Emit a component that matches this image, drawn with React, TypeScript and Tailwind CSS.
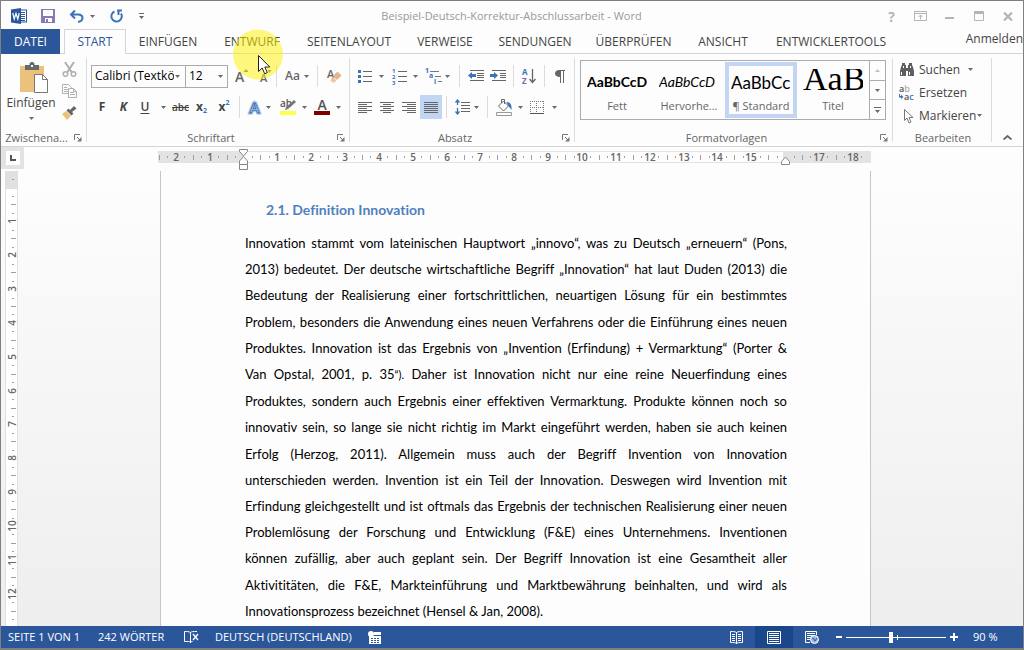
import { useState, type ReactNode } from "react";

const UI_TEXT = "font-['Open_Sans','Noto_Sans',sans-serif]";

function Caret({ className = "" }: { className?: string }) {
  return (
    <svg className={`shrink-0 ${className}`} width="5" height="3" viewBox="0 0 5 3" aria-hidden="true">
      <path d="M0 0h5L2.5 3z" fill="#6b6b6b" />
    </svg>
  );
}

function Tool({
  label,
  height = "h-6",
  className = "",
  children,
}: {
  label: string;
  height?: string;
  className?: string;
  children: ReactNode;
}) {
  return (
    <button type="button" aria-label={label} title={label} className={`flex shrink-0 items-center ${height} ${className}`}>
      {children}
    </button>
  );
}

function Divider({ className = "" }: { className?: string }) {
  return <span className={`h-[22px] w-px shrink-0 bg-[#dcdcdc] ${className}`} />;
}

function Launcher({ label }: { label: string }) {
  return (
    <button type="button" aria-label={label} className="flex h-4 w-4 shrink-0 items-center justify-center">
      <svg width="8" height="8" viewBox="0 0 8 8" fill="none" stroke="#777" aria-hidden="true">
        <path d="M.5 6V.5H6M3 3l3 3" />
        <path d="M7.5 3v4.500H3z" fill="#777" stroke="none" />
      </svg>
    </button>
  );
}

function Group({
  title,
  className,
  launcher = false,
  children,
}: {
  title: string;
  className: string;
  launcher?: boolean;
  children: ReactNode;
}) {
  return (
    <section aria-label={title} className={`flex shrink-0 flex-col py-1 ${className}`}>
      <div className="flex flex-1 flex-col border-r border-[#dcdcdc]">
        <div className="flex-1">{children}</div>
        <div className="flex h-2 items-center text-[11px] text-[#666]">
          <span className="flex-1 pl-[2px] text-center whitespace-nowrap">{title}</span>
          {launcher && <Launcher label={`${title}: Optionen`} />}
        </div>
      </div>
    </section>
  );
}

function Lines({ widths, align = "left" }: { widths: number[]; align?: "left" | "center" | "right" }) {
  return (
    <svg width="14" height="14" viewBox="0 0 14 14" fill="#666" aria-hidden="true">
      {widths.map((w, i) => (
        <rect
          key={i}
          x={align === "left" ? 0 : align === "right" ? 14 - w : (14 - w) / 2}
          y={i * 2 + 2}
          width={w}
          height="1"
        />
      ))}
    </svg>
  );
}

const TABS: { name: string; width: string }[] = [
  { name: "EINFÜGEN", width: "w-[84px]" },
  { name: "ENTWURF", width: "w-[84px]" },
  { name: "SEITENLAYOUT", width: "w-[110px]" },
  { name: "VERWEISE", width: "w-[82px]" },
  { name: "SENDUNGEN", width: "w-[98px]" },
  { name: "ÜBERPRÜFEN", width: "w-[99px]" },
  { name: "ANSICHT", width: "w-[80px]" },
  { name: "ENTWICKLERTOOLS", width: "w-[136px]" },
];

function TitleBar() {
  return (
    <header className="flex h-7 shrink-0 items-center pt-[2px]">
      <div className="flex flex-1 items-center">
        <svg className="ml-[10px]" width="16" height="16" viewBox="0 0 16 16" aria-hidden="true">
          <rect x="8.500" y="2" width="7" height="12" fill="#fff" stroke="#2b579a" />
          <path d="M10 4.500h4M10 6.500h4M10 8.500h4M10 10.500h4M10 12.500h4" stroke="#2b579a" />
          <path d="M0 1.500 10 0v16L0 14.500z" fill="#2b579a" />
          <path d="m1.800 5 1.400 6L5 5.500 6.800 11 8.200 5" fill="none" stroke="#fff" strokeWidth="1.200" />
        </svg>
        <Tool label="Speichern" className="ml-[13px] w-4 justify-center">
          <svg width="14" height="14" viewBox="0 0 14 14" aria-hidden="true">
            <path d="M0 0h14v14H0z" fill="#8a7ab3" />
            <path d="M2 1h10v6H2zM4 9h7v4H4z" fill="#fdfdfd" />
            <path d="M5 10h2v3H5z" fill="#8a7ab3" />
          </svg>
        </Tool>
        <Tool label="Rückgängig" className="ml-3 w-4 justify-center">
          <svg width="15" height="13" viewBox="0 0 15 13" fill="none" stroke="#3b73b9" strokeWidth="2" aria-hidden="true">
            <path d="M6 .5 2 4.500l4 4M2 4.500h7c3 0 4.500 1.500 4.500 3.500S12 11.500 9 12" />
          </svg>
        </Tool>
        <Tool label="Rückgängig: Verlauf" className="ml-[2px] w-3 justify-center">
          <Caret />
        </Tool>
        <Tool label="Wiederholen" className="ml-[11px] w-4 justify-center">
          <svg width="14" height="14" viewBox="0 0 14 14" fill="none" stroke="#3b73b9" strokeWidth="2" aria-hidden="true">
            <path d="M4.500 2.500A5.200 5.200 0 1 0 11 4.500M7 1.500h5M8.500 1v5" />
          </svg>
        </Tool>
        <Tool label="Symbolleiste anpassen" className="ml-[10px] w-3 justify-center">
          <svg width="5" height="6" viewBox="0 0 5 6" fill="#666" aria-hidden="true">
            <path d="M0 0h5v1H0zM0 3h5L2.500 6z" />
          </svg>
        </Tool>
      </div>
      <h1 className="shrink-0 text-[11px] text-[#999]">Beispiel-Deutsch-Korrektur-Abschlussarbeit - Word</h1>
      <div className="flex flex-1 items-center justify-end pr-px text-[#b5b5b5]">
        <Tool label="Hilfe" className="w-[29px] justify-center text-[14px] font-bold">
          ?
        </Tool>
        <Tool label="Menüband-Anzeigeoptionen" className="w-[29px] justify-center">
          <svg width="13" height="10" viewBox="0 0 13 10" fill="none" stroke="currentColor" aria-hidden="true">
            <path d="M.5 .5h12v9H.5zM.5 2.500h12M6.500 8.500V4M4.500 6l2-2 2 2" />
          </svg>
        </Tool>
        <Tool label="Minimieren" className="w-[29px] justify-center">
          <svg width="9" height="10" viewBox="0 0 9 10" aria-hidden="true">
            <path d="M0 6h9v2H0z" fill="currentColor" />
          </svg>
        </Tool>
        <Tool label="Maximieren" className="w-[29px] justify-center">
          <svg width="10" height="10" viewBox="0 0 10 10" fill="none" stroke="currentColor" aria-hidden="true">
            <path d="M.5 .5h9v9h-9zM0 1.500h10M0 2.500h10" />
          </svg>
        </Tool>
        <Tool label="Schließen" className="w-[29px] justify-center">
          <svg width="10" height="9" viewBox="0 0 10 9" stroke="currentColor" strokeWidth="2.200" aria-hidden="true">
            <path d="m1 .5 8 8M9 .5l-8 8" />
          </svg>
        </Tool>
      </div>
    </header>
  );
}

function TabBar() {
  return (
    <nav className="flex h-[25px] shrink-0 items-stretch text-[12px] text-[#444]">
      <button type="button" className="w-[59px] bg-[#2b579a] pt-px text-white">
        DATEI
      </button>
      <span className="w-1 border-b border-[#d4d4d4]" />
      <button type="button" aria-current="page" className="w-[62px] border-x border-t border-[#d4d4d4] text-[#2b579a]">
        START
      </button>
      {TABS.map((tab) => (
        <button key={tab.name} type="button" className={`shrink-0 border-b border-[#d4d4d4] pt-[2px] ${tab.width}`}>
          {tab.name}
        </button>
      ))}
      <a href="#anmelden" className="flex-1 border-b border-[#d4d4d4] pt-px text-right whitespace-nowrap">
        Anmelden
      </a>
    </nav>
  );
}

function ClipboardGroup() {
  return (
    <Group title="Zwischena..." className="w-[86px]" launcher>
      <div className="flex">
        <button type="button" className="flex w-[60px] flex-col items-center pt-1 text-[12px] leading-4 text-[#444]">
          <svg className="ml-[6px]" width="30" height="32" viewBox="0 0 30 32" aria-hidden="true">
            <path d="M1 4h24v26H1z" fill="#ebc27c" />
            <path d="M6 3h4.500V1.500L12 0h2l1.500 1.500V3H20v5H6z" fill="#6a6a6a" />
            <path d="M12 3h2v2h-2z" fill="#fff" />
            <path d="M15.500 12.500h8l5 5v13h-13z" fill="#fff" stroke="#777" />
            <path d="M23.500 12.500v5h5" fill="none" stroke="#777" />
          </svg>
          <span className="mt-px">Einfügen</span>
          <Caret className="mt-[6px]" />
        </button>
        <div className="flex flex-col">
          <Tool label="Ausschneiden" height="h-[22px]" className="w-4 justify-center">
            <svg width="15" height="15" viewBox="0 0 15 15" fill="none" stroke="#b0b0b0" strokeWidth="1.500" aria-hidden="true">
              <path d="m3 0 6.500 10M12 0 5.500 10" strokeWidth="2" />
              <circle cx="3.500" cy="12" r="2.300" />
              <circle cx="11.500" cy="12" r="2.300" />
            </svg>
          </Tool>
          <Tool label="Kopieren" height="h-[22px]" className="w-4 justify-center">
            <svg width="15" height="14" viewBox="0 0 15 14" fill="#fdfdfd" stroke="#b0b0b0" aria-hidden="true">
              <path d="M.5 .5h6l3 3v6h-9zM2 3.500h3M2 5.500h4M2 7.500h4" />
              <path d="M6.500 4.500h5l3 3v6h-8zM8 8.500h4M8 10.500h5M11.500 4.500v3h3" />
            </svg>
          </Tool>
          <Tool label="Format übertragen" height="h-[22px]" className="w-4 justify-center">
            <svg width="16" height="14" viewBox="0 0 16 14" aria-hidden="true">
              <path d="m1 8 4-3 5 5-4 4z" fill="#ebc27c" />
              <path d="m5.500 4.500 2-2 1.500 1.500L13 0l2.500 2.500L11 6l1.500 1.500-2 2z" fill="#666" />
            </svg>
          </Tool>
        </div>
      </div>
    </Group>
  );
}

function FontGroup() {
  return (
    <Group title="Schriftart" className="w-[263px]" launcher>
      <div className="flex h-[36px] items-center pl-1">
        <div className="flex h-[23px] w-[95px] shrink-0 items-center border border-[#ababab]">
          <select aria-label="Schriftart" className="h-full w-[82px] appearance-none overflow-hidden bg-transparent pl-[3px] text-[12px] text-black outline-none">
            <option>Calibri (Textkörper)</option>
          </select>
          <Caret className="ml-px" />
        </div>
        <div className="-ml-px flex h-[23px] w-[43px] shrink-0 items-center border border-[#ababab]">
          <select aria-label="Schriftgrad" className="h-full w-8 appearance-none bg-transparent pl-[3px] text-[12px] text-black outline-none">
            <option>12</option>
          </select>
          <Caret />
        </div>
        <Tool label="Schriftgrad vergrößern" className="ml-[2px] w-6 justify-center">
          <svg className="overflow-visible" width="14" height="14" viewBox="0 0 14 14" aria-hidden="true">
            <text x="0" y="13" fontSize="14" fontWeight="600" fill="#666">A</text>
            <path d="m8.500 3 2.500-3 2.500 3z" fill="#7a6a6a" />
          </svg>
        </Tool>
        <Tool label="Schriftgrad verkleinern" className="w-[22px] justify-center">
          <svg className="overflow-visible" width="14" height="14" viewBox="0 0 14 14" aria-hidden="true">
            <text x="2" y="13" fontSize="11" fontWeight="600" fill="#666">A</text>
            <path d="M9.500 1h4L11.500 4z" fill="#7a6a6a" />
          </svg>
        </Tool>
        <Divider />
        <Tool label="Groß-/Kleinschreibung" className="w-10 justify-center gap-1 text-[12px] font-semibold text-[#666]">
          Aa
          <Caret />
        </Tool>
        <Divider />
        <Tool label="Formatierung löschen" className="w-6 justify-end">
          <svg className="overflow-visible" width="15" height="16" viewBox="0 0 15 16" aria-hidden="true">
            <text x="0" y="10" fontSize="11" fontWeight="600" fill="#666">A</text>
            <path d="m10.500 3.500 4 4-4.500 4.500-4-4z" fill="#e8b48a" />
            <path d="m5.500 8.500 4 4-2 2h-2l-2-2z" fill="#eec3a1" />
          </svg>
        </Tool>
      </div>
      <div className="flex h-[26px] items-center pl-1 text-[12px] text-[#444]">
        <Tool label="Fett" className="w-[22px] justify-center font-bold">F</Tool>
        <Tool label="Kursiv" className="w-[21px] justify-center font-bold italic">K</Tool>
        <Tool label="Unterstrichen" className="w-[22px] justify-center font-semibold underline underline-offset-2">U</Tool>
        <Tool label="Unterstreichungsart" className="w-[15px] justify-center"><Caret /></Tool>
        <Tool label="Durchgestrichen" className="w-[19px] justify-center text-[10px] font-semibold line-through">abc</Tool>
        <Tool label="Tiefgestellt" className="w-[23px] justify-center font-bold">
          x<span className="mt-2 text-[7px] text-[#3b73b9]">2</span>
        </Tool>
        <Tool label="Hochgestellt" className="w-[22px] justify-center font-bold">
          x<span className="mb-2 text-[7px] text-[#3b73b9]">2</span>
        </Tool>
        <Divider className="ml-1" />
        <Tool label="Texteffekte" className="w-[35px] gap-1 pl-2">
          <svg className="overflow-visible" width="14" height="15" viewBox="0 0 14 15" aria-hidden="true">
            <text x="1.500" y="13" fontSize="15" fontWeight="600" fill="#fff" stroke="#a9c4e6" strokeWidth="3">A</text>
            <text x="1.500" y="13" fontSize="15" fontWeight="600" fill="#fff" stroke="#3b73b9" strokeWidth="1">A</text>
          </svg>
          <Caret />
        </Tool>
        <Tool label="Texthervorhebungsfarbe" className="w-[33px] gap-[5px] pl-[5px]">
          <svg className="overflow-visible" width="17" height="17" viewBox="0 0 17 17" aria-hidden="true">
            <text x="0" y="8" fontSize="10" fontWeight="600" fill="#555">ab</text>
            <path d="m5 11 1-3 8-7 2 2-8 7z" fill="#777" />
            <path d="M0 12h16v4H0z" fill="#ffff45" />
          </svg>
          <Caret />
        </Tool>
        <Tool label="Schriftfarbe" className="w-[37px] gap-[6px] pl-[6px]">
          <svg className="overflow-visible" width="16" height="17" viewBox="0 0 16 17" aria-hidden="true">
            <text x="3.500" y="11" fontSize="14" fontWeight="600" fill="#555">A</text>
            <path d="M0 12h16v4H0z" fill="#7d0000" />
          </svg>
          <Caret />
        </Tool>
      </div>
    </Group>
  );
}

function ParagraphGroup() {
  return (
    <Group title="Absatz" className="w-[225px]" launcher>
      <div className="flex h-[36px] items-center pl-2">
        <Tool label="Aufzählungszeichen" className="w-[31px] gap-[7px]">
          <svg width="14" height="15" viewBox="0 0 14 15" aria-hidden="true">
            <path d="M0 1h3v3H0zM0 6h3v3H0zM0 11h3v3H0z" fill="#3b73b9" />
            <path d="M5 2h9v1H5zM5 7h9v1H5zM5 12h9v1H5z" fill="#666" />
          </svg>
          <Caret />
        </Tool>
        <Tool label="Nummerierung" className="ml-[3px] w-[31px] gap-[6px]">
          <svg className="overflow-visible" width="15" height="17" viewBox="0 0 15 17" aria-hidden="true">
            <g fontSize="6" fontWeight="700" fill="#3b73b9">
              <text x="0" y="5">1</text>
              <text x="0" y="11">2</text>
              <text x="0" y="17">3</text>
            </g>
            <path d="M6 3h9v1H6zM6 8h9v1H6zM6 13h9v1H6z" fill="#666" />
          </svg>
          <Caret />
        </Tool>
        <Tool label="Liste mit mehreren Ebenen" className="ml-[2px] w-[28px] gap-[3px]">
          <svg className="overflow-visible" width="17" height="17" viewBox="0 0 17 17" aria-hidden="true">
            <g fontSize="7" fontWeight="700" fill="#3b73b9">
              <text x="0" y="5">1</text>
              <text x="4" y="10">a</text>
              <text x="9" y="16">i</text>
            </g>
            <path d="M5 3h9v1H5zM10 8h6v1h-6zM13 13h4v1h-4z" fill="#777" />
          </svg>
          <Caret />
        </Tool>
        <Divider className="ml-[6px]" />
        <Tool label="Einzug verkleinern" className="ml-[6px] w-[19px] justify-center">
          <svg width="16" height="12" viewBox="0 0 16 12" aria-hidden="true">
            <path d="M2 0h14v1H2zM9 3h7v1H9zM9 5h7v1H9zM9 7h7v1H9zM2 10h14v1H2z" fill="#666" />
            <path d="M0 5.500 4 2v2h4v3H4v2z" fill="#3b73b9" />
          </svg>
        </Tool>
        <Tool label="Einzug vergrößern" className="ml-[3px] w-[19px] justify-center">
          <svg width="16" height="12" viewBox="0 0 16 12" aria-hidden="true">
            <path d="M2 0h14v1H2zM10 3h6v1h-6zM10 5h6v1h-6zM10 7h6v1h-6zM2 10h14v1H2z" fill="#666" />
            <path d="M8 5.500 4 2v2H0v3h4v2z" fill="#3b73b9" />
          </svg>
        </Tool>
        <Divider className="ml-[6px]" />
        <Tool label="Sortieren" className="w-[30px] justify-center">
          <svg className="overflow-visible" width="14" height="17" viewBox="0 0 14 17" aria-hidden="true">
            <text x="0" y="7" fontSize="8" fontWeight="700" fill="#3b73b9">A</text>
            <text x="0" y="16" fontSize="8" fontWeight="700" fill="#8064a2">Z</text>
            <path d="M10.500 1v13M7.500 11l3 3.500 3-3.500" fill="none" stroke="#666" strokeWidth="1.300" />
          </svg>
        </Tool>
        <Divider />
        <Tool label="Alle anzeigen" className="w-[30px] justify-center">
          <svg width="10" height="13" viewBox="0 0 10 13" aria-hidden="true">
            <path d="M4 0h6v1H9v12H8V1H6v12H5V7C2 7 0 5.500 0 3.500S2 0 4 0z" fill="#666" />
          </svg>
        </Tool>
      </div>
      <div className="flex h-[26px] items-center pl-1">
        <Tool label="Linksbündig" className="w-[22px] justify-center"><Lines widths={[14, 9, 14, 9, 14, 9]} /></Tool>
        <Tool label="Zentriert" className="w-[22px] justify-center"><Lines widths={[14, 8, 14, 8, 14, 8]} align="center" /></Tool>
        <Tool label="Rechtsbündig" className="w-[22px] justify-center"><Lines widths={[14, 9, 14, 9, 14, 9]} align="right" /></Tool>
        <Tool label="Blocksatz" className="w-[22px] justify-center bg-[#c2d5f2]"><Lines widths={[14, 14, 14, 14, 14, 14]} /></Tool>
        <Divider className="ml-1" />
        <Tool label="Zeilenabstand" className="ml-2 w-[25px] gap-1">
          <svg width="15" height="16" viewBox="0 0 15 16" aria-hidden="true">
            <path d="M6 3h9v1H6zM6 6h9v1H6zM6 9h9v1H6zM6 12h9v1H6z" fill="#666" />
            <path d="M2.500 1v5M.5 3.500l2-2.500 2 2.500M2.500 9v6M.5 12.500l2 2.500 2-2.500" fill="none" stroke="#3b73b9" strokeWidth="1.300" />
          </svg>
          <Caret />
        </Tool>
        <Divider className="ml-[7px]" />
        <Tool label="Schattierung" className="ml-2 w-[27px] gap-[5px]">
          <svg width="17" height="17" viewBox="0 0 17 17" aria-hidden="true">
            <path d="m2.500 7 5-5 5 5-5 5zM5.500 4V.5h3V5" fill="#fff" stroke="#666" />
            <path d="M10.500 3c3.500 0 5.500 2 5 8L12.500 7z" fill="#3b73b9" />
            <path d="M.5 13.500h15v3H.5z" fill="#fff" stroke="#999" />
          </svg>
          <Caret />
        </Tool>
        <Tool label="Rahmen" className="ml-[7px] w-[28px] gap-2">
          <svg width="14" height="13" viewBox="0 0 14 13" fill="none" stroke="#777" aria-hidden="true">
            <path d="M0 .5h14M.5 0v12M13.500 0v12M0 6.500h14M6.500 0v12" strokeDasharray="1 1" />
            <path d="M0 12.500h14" stroke="#555" />
          </svg>
          <Caret />
        </Tool>
      </div>
    </Group>
  );
}

const CALIBRI = "font-['Lato','Open_Sans',sans-serif]";

function StylesGroup() {
  const styles = [
    { name: "Fett", sample: "AaBbCcD", look: `font-bold text-[14px] ${CALIBRI}`, active: false },
    { name: "Hervorhe...", sample: "AaBbCcD", look: `italic text-[14px] ${CALIBRI}`, active: false },
    { name: "¶ Standard", sample: "AaBbCc", look: `text-[17px] ${CALIBRI}`, active: true },
    { name: "Titel", sample: "AaB", look: "pb-[6px] text-[34px] font-['Liberation_Serif',serif]", active: false },
  ];
  return (
    <Group title="Formatvorlagen" className="w-[318px]" launcher>
      <div className="px-[5px] pt-[2px]">
        <div className="flex h-[60px] w-[306px] border border-[#ababab]">
          {styles.map((s) => (
            <button
              key={s.name}
              type="button"
              aria-pressed={s.active}
              className={`my-px flex w-[72px] shrink-0 flex-col items-center border-4 ${s.active ? "border-[#c2d5f2]" : "border-transparent"}`}
            >
              <span className={`mt-[3px] flex h-[26px] w-[60px] shrink-0 items-center overflow-hidden leading-none whitespace-nowrap text-black ${s.look}`}>
                {s.sample}
              </span>
              <span className="mt-[3px] text-[11px] leading-4 whitespace-nowrap text-[#666]">{s.name}</span>
            </button>
          ))}
          <div className="flex flex-1 flex-col divide-y divide-[#ababab] border-l border-[#ababab]">
            <button type="button" aria-label="Vorherige Zeile" className="flex flex-1 items-center justify-center">
              <svg width="5" height="3" viewBox="0 0 5 3" aria-hidden="true"><path d="M0 3h5L2.500 0z" fill="#c0c0c0" /></svg>
            </button>
            <button type="button" aria-label="Nächste Zeile" className="flex flex-1 items-center justify-center">
              <Caret />
            </button>
            <button type="button" aria-label="Weitere" className="flex flex-1 items-center justify-center">
              <svg width="7" height="6" viewBox="0 0 7 6" fill="#666" aria-hidden="true"><path d="M0 0h7v1H0zM1 3h5L3.500 6z" /></svg>
            </button>
          </div>
        </div>
      </div>
    </Group>
  );
}

function EditGroup() {
  return (
    <Group title="Bearbeiten" className="w-[99px]">
      <div className="flex flex-col pl-[6px] text-[12px] text-[#444]">
        <button type="button" className="flex h-[23px] items-center">
          <svg width="16" height="14" viewBox="0 0 16 14" aria-hidden="true">
            <path d="M3 0h3v2h1v3h2V2h1V0h3v2l1 2 1 4v5H9V8H7v5H1V8l1-4 1-2z" fill="#5f5f5f" />
            <path d="M4 3h1v2H4zM11 3h1v2h-1zM2 9h1v3H2zM10 9h1v3h-1z" fill="#fff" />
          </svg>
          <span className="ml-1">Suchen</span>
          <Caret className="ml-2" />
        </button>
        <button type="button" className="flex h-[23px] items-center">
          <svg className="overflow-visible" width="16" height="16" viewBox="0 0 16 16" aria-hidden="true">
            <text x="0" y="7" fontSize="9" fontWeight="600" fill="#555">a<tspan fill="#aaa">b</tspan></text>
            <text x="5" y="15" fontSize="9" fontWeight="600" fill="#555">a<tspan fill="#3b73b9">c</tspan></text>
            <path d="M0 9h1v2h1V9.500L4.500 12 2 14v-1.500H0z" fill="#3b73b9" />
          </svg>
          <span className="ml-1">Ersetzen</span>
        </button>
        <button type="button" className="flex h-[23px] items-center">
          <svg className="ml-1" width="12" height="16" viewBox="0 0 12 16" fill="#fff" stroke="#777" aria-hidden="true">
            <path d="M1.500 1.500v11l2.500-2.500 2 5 2-1-2-4.500h4z" />
          </svg>
          <span className="ml-1">Markieren</span>
          <Caret className="ml-px" />
        </button>
      </div>
    </Group>
  );
}

function Ribbon() {
  return (
    <div className="flex h-[93px] shrink-0 border-b border-[#d4d4d4]">
      <ClipboardGroup />
      <FontGroup />
      <ParagraphGroup />
      <StylesGroup />
      <EditGroup />
      <button type="button" aria-label="Menüband reduzieren" className="flex flex-1 items-end justify-center pb-[6px]">
        <svg width="9" height="5" viewBox="0 0 9 5" fill="none" stroke="#666" strokeWidth="1.800" aria-hidden="true">
          <path d="m.5 4.500 4-3.500 4 3.500" />
        </svg>
      </button>
    </div>
  );
}

const CM = 33.85;

function HorizontalRuler() {
  const zero = 85.5;
  const quarters = Array.from({ length: 84 }, (_, i) => i - 10);
  return (
    <svg width="713" height="22" viewBox="0 0 713 22" aria-label="Horizontales Lineal" role="img" className="relative shrink-0 overflow-visible">
      <path d="M0 4h713v12H0z" fill="#e3e3e3" />
      <path d="M85 5h540v10H85z" fill="#fdfdfd" />
      {quarters.map((q) => {
        const x = Math.round(zero + (q * CM) / 4);
        if (q === 0 || q === 64 || x < 0 || x > 712) return null;
        if (q % 4 === 0) {
          return (
            <text key={q} x={x} y="14" fontSize="10" fontWeight="600" textAnchor="middle" fill="#666">
              {Math.abs(q / 4)}
            </text>
          );
        }
        const tall = q % 2 === 0;
        return <rect key={q} x={x} y={tall ? 8 : 9} width="1" height={tall ? 5 : 2} fill="#a0a0a0" />;
      })}
      <g fill="#fff" stroke="#888">
        <path d="M81.500 2.500h8v2l-4 4.500-4-4.500z" />
        <path d="M81.500 17.500v-3.500l4-4.500 4 4.500v3.500zM81.500 17.500h8v5h-8z" />
        <path d="M623.500 17.500v-3l4-4.500 4 4.500v3z" />
      </g>
    </svg>
  );
}

function VerticalRuler() {
  const quarters = Array.from({ length: 53 }, (_, i) => i - 1);
  return (
    <svg width="24" height="456" viewBox="0 0 24 456" aria-label="Vertikales Lineal" role="img" className="absolute top-0 left-0">
      <path d="M4 0h13v456H4z" fill="#e0e0e0" />
      <path d="M5 18h11v438H5z" fill="#fff" />
      {quarters.map((q) => {
        const y = Math.round(16.500 + (q * CM) / 4);
        if (q === 0) return null;
        if (q % 4 === 0) {
          return (
            <text key={q} x="0" y="0" fontSize="10" fontWeight="600" textAnchor="middle" fill="#666" transform={`translate(15 ${y}) rotate(-90)`}>
              {q / 4}
            </text>
          );
        }
        const tall = q % 2 === 0;
        return <rect key={q} x={tall ? 10 : 11} y={y} width={tall ? 5 : 2} height="1" fill="#a0a0a0" />;
      })}
    </svg>
  );
}

const LINES: ReactNode[] = [
  "Innovation stammt vom lateinischen Hauptwort „innovo“, was zu Deutsch „erneuern“ (Pons,",
  "2013) bedeutet. Der deutsche wirtschaftliche Begriff „Innovation“ hat laut Duden (2013) die",
  "Bedeutung der Realisierung einer fortschrittlichen, neuartigen Lösung für ein bestimmtes",
  "Problem, besonders die Anwendung eines neuen Verfahrens oder die Einführung eines neuen",
  "Produktes. Innovation ist das Ergebnis von „Invention (Erfindung) + Vermarktung“ (Porter &",
  <>
    Van Opstal, 2001, p. 35<span className="text-[11px]">“).</span> Daher ist Innovation nicht nur eine reine Neuerfindung eines
  </>,
  "Produktes, sondern auch Ergebnis einer effektiven Vermarktung. Produkte können noch so",
  "innovativ sein, so lange sie nicht richtig im Markt eingeführt werden, haben sie auch keinen",
  "Erfolg (Herzog, 2011). Allgemein muss auch der Begriff Invention von Innovation",
  "unterschieden werden. Invention ist ein Teil der Innovation. Deswegen wird Invention mit",
  "Erfindung gleichgestellt und ist oftmals das Ergebnis der technischen Realisierung einer neuen",
  "Problemlösung der Forschung und Entwicklung (F&E) eines Unternehmens. Inventionen",
  "können zufällig, aber auch geplant sein. Der Begriff Innovation ist eine Gesamtheit aller",
  "Aktivititäten, die F&E, Markteinführung und Marktbewährung beinhalten, und wird als",
];

function Workspace() {
  return (
    <>
      <div className="flex h-6 shrink-0 items-start">
        <button type="button" aria-label="Tabstopp links" className="flex h-[22px] w-[23px] shrink-0 items-center justify-center bg-[#e3e3e3]">
          <span className="flex h-[14px] w-[14px] items-center justify-center bg-white">
            <span className="h-[6px] w-[6px] border-b-2 border-l-2 border-[#555]" />
          </span>
        </button>
        <div className="flex flex-1 justify-center pr-[18px]">
          <HorizontalRuler />
        </div>
      </div>
      <div className="flex min-h-0 flex-1 bg-linear-to-b from-[#fdfdfd] to-[#eeeeee]">
        <div className="relative w-[23px] shrink-0 overflow-hidden">
          <VerticalRuler />
        </div>
        <main className="flex flex-1 justify-center pr-4">
          <article
            lang="de"
            className={`flex w-[711px] flex-col border-x border-[#c6c6c6] bg-[#fdfdfd] pt-[26px] pr-[83px] pl-[84px] text-[13px] leading-[26px] text-black [font-variant-ligatures:none] ${CALIBRI}`}
          >
            <h2 className="pl-[21px] text-[14px] font-bold text-[#4f81bd]">2.1. Definition Innovation</h2>
            <div className="mt-[7px] flex flex-1 flex-col justify-between pb-[2px]">
              {LINES.map((line, i) => (
                <p key={i} className="whitespace-nowrap [text-align-last:justify]">{line}</p>
              ))}
              <p>Innovationsprozess bezeichnet (Hensel &amp; Jan, 2008).</p>
            </div>
          </article>
        </main>
      </div>
    </>
  );
}

function StatusBar() {
  const [zoom, setZoom] = useState(90);
  return (
    <footer className="relative flex h-[22px] shrink-0 items-center bg-[#2b579a] pl-[7px] text-[11px] text-white">
      <span className="w-[90px]">SEITE 1 VON 1</span>
      <span className="w-[86px]">242 WÖRTER</span>
      <button type="button" aria-label="Rechtschreibprüfung">
        <svg width="15" height="14" viewBox="0 0 15 14" fill="none" stroke="#fff" aria-hidden="true">
          <path d="M6.500 2.500C5 1.500 3 1.500.5 1.500v10h4c1 0 2 .5 2 1.500 0-1 1-1.500 2-1.500M6.500 2.500v10M6.500 2.500C7.500 1.500 9 1.500 13 1.500" />
          <path d="m9 4 5 6M14 4l-5 6" strokeWidth="1.400" />
        </svg>
      </button>
      <span className="ml-4 w-[153px]">DEUTSCH (DEUTSCHLAND)</span>
      <button type="button" aria-label="Makro aufzeichnen">
        <svg width="13" height="13" viewBox="0 0 13 13" aria-hidden="true">
          <path d="M6 1h7v3H6zM1 5h12v8H1z" fill="#fff" />
          <path d="M3 7h2v1H3zM6 7h2v1H6zM9 7h2v1H9zM3 9h2v1H3zM6 9h2v1H6zM9 9h2v1H9zM3 11h2v1H3zM6 11h2v1H6zM9 11h2v1H9z" fill="#2b579a" />
          <circle cx="3" cy="3" r="3" fill="#fff" />
        </svg>
      </button>
      <div className="ml-auto flex h-full items-center">
        <Tool label="Lesemodus" className="w-[38px] justify-center">
          <svg width="13" height="13" viewBox="0 0 13 13" fill="none" stroke="#fff" aria-hidden="true">
            <path d="M6.500 1.500C5 .5 3 .5.5.5v11c3 0 5 0 6 1 1-1 3-1 6-1V.5c-2.500 0-4.500 0-6 1zM6.500 1v12M2 3.500h3M2 5.500h3M2 7.500h3M2 9.500h3M8 3.500h3M8 5.500h3M8 7.500h3M8 9.500h3" />
          </svg>
        </Tool>
        <Tool label="Seitenlayout" height="h-full" className="w-[38px] justify-center bg-[#19478a]">
          <svg width="14" height="13" viewBox="0 0 14 13" fill="none" stroke="#fff" aria-hidden="true">
            <path d="M.5 .5h13v12H.5zM2 2.500h10M2 4.500h10M2 6.500h10M2 8.500h10M2 10.500h10" />
          </svg>
        </Tool>
        <Tool label="Weblayout" className="w-[38px] justify-center">
          <svg width="14" height="13" viewBox="0 0 14 13" fill="none" stroke="#fff" aria-hidden="true">
            <path d="M5 11.500H.5V.5h11V4M2 2.500h8M2 4.500h8M2 6.500h4M2 8.500h3" />
            <circle cx="9.500" cy="8.500" r="4" fill="#9db8dc" stroke="#fff" />
            <path d="m7 7 2 1 1 2 2-3" stroke="#2b579a" />
          </svg>
        </Tool>
        <Tool label="Verkleinern" className="ml-px w-[14px] justify-center">
          <svg width="6" height="2" viewBox="0 0 6 2" aria-hidden="true"><path d="M0 0h6v2H0z" fill="#fff" /></svg>
        </Tool>
        <div className="relative flex h-full w-[100px] items-center">
          <span className="absolute left-[51px] h-[5px] w-px bg-white" />
          <input
            type="range"
            aria-label="Zoom"
            min={0}
            max={200}
            value={zoom}
            onChange={(e) => setZoom(Number(e.target.value))}
            className="h-3 w-full appearance-none bg-transparent bg-[linear-gradient(#fff,#fff)] bg-[length:100%_1px] bg-center bg-no-repeat outline-none [&::-webkit-slider-thumb]:h-[11px] [&::-webkit-slider-thumb]:w-1 [&::-webkit-slider-thumb]:appearance-none [&::-webkit-slider-thumb]:bg-white"
          />
        </div>
        <Tool label="Vergrößern" className="w-4 justify-center">
          <svg width="8" height="8" viewBox="0 0 8 8" aria-hidden="true"><path d="M3 0h2v3h3v2H5v3H3V5H0V3h3z" fill="#fff" /></svg>
        </Tool>
        <span className="ml-[11px] w-[50px]">{zoom} %</span>
      </div>
    </footer>
  );
}

function Pointer() {
  return (
    <div className="pointer-events-none absolute top-7 left-[232px]" aria-hidden="true">
      <svg width="50" height="52" viewBox="0 0 50 52">
        <circle cx="25" cy="25.500" r="25" fill="#fff200" fillOpacity=".5" />
        <path d="M25.500 26.500v16l3.700-3.500 2.500 5.800 2.600-1.200-2.500-5.600h5z" fill="#fff" stroke="#222" />
      </svg>
    </div>
  );
}

export default function App() {
  return (
    <div className={`relative flex h-screen flex-col overflow-hidden border-x border-t border-b-2 border-[#7f7f7f] bg-[#fdfdfd] ${UI_TEXT}`}>
      <TitleBar />
      <TabBar />
      <Ribbon />
      <Workspace />
      <StatusBar />
      <Pointer />
    </div>
  );
}
